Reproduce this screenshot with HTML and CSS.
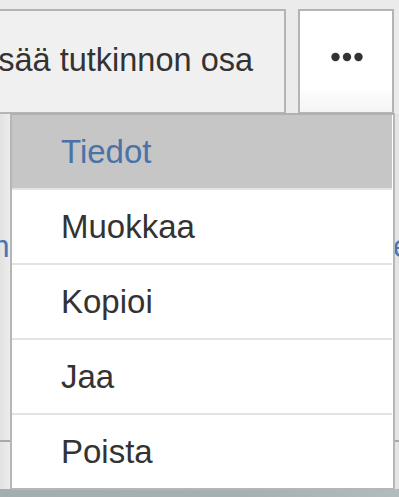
FILE: index.html
```html
<!DOCTYPE html>
<html lang="fi">
<head>
<meta charset="utf-8">
<title>Tutkinnon osa</title>
<link rel="stylesheet" href="styles.css">
</head>
<body>
<div class="page">
  <div class="toolbar">
    <button class="btn btn-add" type="button">Lisää tutkinnon osa</button>
    <button class="btn btn-more" type="button" aria-label="Lisää toimintoja">
      <svg class="dots" width="32" height="10" viewBox="0 0 32 10" aria-hidden="true">
        <circle cx="4.5" cy="5" r="4.2" fill="#333"/>
        <circle cx="16" cy="5" r="4.2" fill="#333"/>
        <circle cx="27.5" cy="5" r="4.2" fill="#333"/>
      </svg>
    </button>
  </div>
  <div class="content">
    <div class="links">
      <span class="link link-left">nim</span>
      <span class="link link-right">ehto</span>
    </div>
    <div class="rule"></div>
  </div>
  <div class="footer"></div>

  <ul class="menu">
    <li class="menu-item active">Tiedot</li>
    <li class="menu-item">Muokkaa</li>
    <li class="menu-item">Kopioi</li>
    <li class="menu-item">Jaa</li>
    <li class="menu-item">Poista</li>
  </ul>
</div>
</body>
</html>
```

FILE: styles.css
```css
html, body {
  margin: 0;
  padding: 0;
}
body {
  width: 399px;
  height: 497px;
  overflow: hidden;
  background: #ebebeb;
  font-family: "Liberation Sans", Arial, sans-serif;
  color: #333;
}
.page {
  position: relative;
  height: 497px;
  display: flex;
  flex-direction: column;
}
.toolbar {
  display: flex;
  gap: 12px;
  padding-top: 9px;
  height: 105px;
  flex: none;
}
.btn {
  box-sizing: border-box;
  height: 105px;
  border: 2px solid #b4b4b4;
  font-family: inherit;
  color: #333;
  padding: 0;
  margin: 0;
}
.btn-add {
  margin-left: -60px;
  width: 346px;
  background: #f0f0f0;
  font-size: 32.5px;
  padding-bottom: 2px;
  white-space: nowrap;
}
.btn-more {
  width: 96px;
  background: linear-gradient(#ffffff 75%, #f4f4f4);
  display: flex;
  align-items: center;
  justify-content: center;
  padding: 0 0 9px 2px;
}
.dots {
  display: block;
}
.content {
  flex: 1;
  background: linear-gradient(90deg, #e2e2e2, #ececec 10px, #ececec 390px, #e2e2e2);
  display: flex;
  flex-direction: column;
}
.links {
  display: flex;
  margin-top: 114px;
  font-size: 32px;
  line-height: 36px;
  color: #4a76b2;
  white-space: nowrap;
}
.link-left {
  margin-left: -42px;
}
.link-right {
  margin-left: auto;
  margin-right: -56px;
}
.rule {
  margin-top: 176px;
  height: 2px;
  background: #a9a9a9;
}
.footer {
  height: 8px;
  flex: none;
  background: linear-gradient(90deg, #a3aeb0, #a6b0b2 60%, #b2bcbe);
}
.menu {
  position: absolute;
  top: 113px;
  left: 10px;
  width: 385px;
  box-sizing: border-box;
  margin: 0;
  padding: 0 1px 0 0;
  list-style: none;
  background: #fff;
  border: 2px solid #b6b6b6;
  border-top: 2px solid #b0b0b0;
}
.menu-item {
  height: 73px;
  box-sizing: content-box;
  display: flex;
  align-items: center;
  padding-left: 49px;
  font-size: 33px;
  color: #333;
  border-bottom: 2px solid #e3e3e3;
}
.menu-item:last-child {
  border-bottom: none;
}
.menu-item.active {
  background: #c6c6c6;
  color: #4a72a6;
}
```
